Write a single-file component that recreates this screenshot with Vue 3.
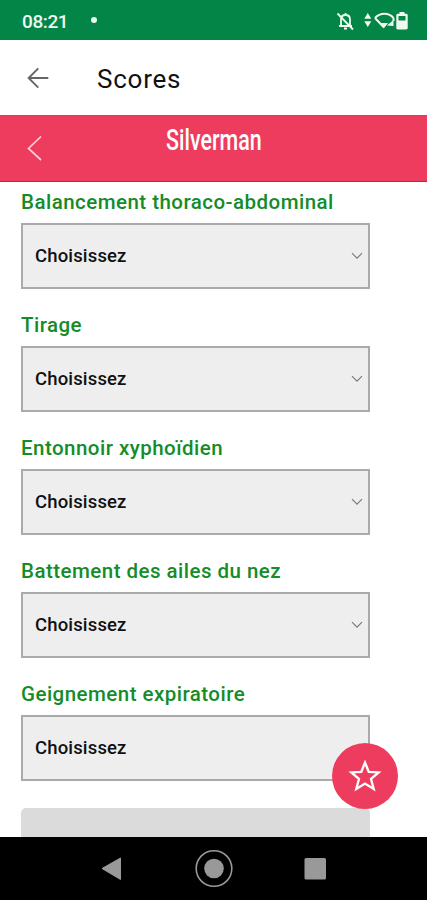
<script setup>
const fields = [
  'Balancement thoraco-abdominal',
  'Tirage',
  'Entonnoir xyphoïdien',
  'Battement des ailes du nez',
  'Geignement expiratoire',
]
</script>

<template>
  <div class="screen">
    <header class="status">
      <span class="time">08:21</span>
      <span class="dot"></span>
      <svg class="status-icons" width="74" height="20" viewBox="0 0 74 20">
        <g fill="none" stroke="#eefaf0" stroke-width="1.8">
          <path d="M4 15h13M6 14.500V8.500C6 5.500 8 4 10.500 4S15 5.500 15 8.500V14.500M10.500 2V4M9 17.500h3" />
          <path d="M2.500 2.500L18 18.500" />
          <path d="M40 7C45 1.400 54 1.400 58.500 7M40 7L48.500 16M58.500 7V10" stroke-width="2" />
        </g>
        <g fill="#eefaf0">
          <path d="M29.300 7.700L32.800 2L36.300 7.700zM29.300 10.300L32.800 16L36.300 10.300z" />
          <path d="M45 12h8L48.800 17.500zM52 14.500L58.500 9v6z" />
          <path fill-rule="evenodd" d="M64.500 1h5v1.800h1.700c.8 0 1.500.6 1.500 1.300v13.200c0 .7-.7 1.200-1.500 1.200h-8.400c-.8 0-1.500-.5-1.500-1.200v-13.200c0-.7.7-1.300 1.500-1.300h1.700zM63.500 5v4.500h7V5z" />
        </g>
      </svg>
    </header>

    <div class="appbar">
      <svg class="back" width="24" height="24" viewBox="0 0 24 24">
        <path d="M22.300 12H2.500M12.300 2.300L2.600 12L12.300 21.700" fill="none" stroke="#666" stroke-width="1.900" />
      </svg>
      <h1>Scores</h1>
    </div>

    <div class="banner">
      <svg class="chevron" width="18" height="28" viewBox="0 0 18 28">
        <path d="M15 2.500L2.500 14.500L15 26" fill="none" stroke="#ffd0d8" stroke-width="1.700" />
      </svg>
      <h2><span>Silverman</span></h2>
    </div>

    <main class="content">
      <section v-for="label in fields" :key="label" class="field">
        <label>{{ label }}</label>
        <div class="select">
          <span>Choisissez</span>
          <svg width="12" height="8" viewBox="0 0 12 8">
            <path d="M1 1.200L6 6.200L11 1.200" fill="none" stroke="#777" stroke-width="1.100" />
          </svg>
        </div>
      </section>
      <div class="result"></div>
      <button class="fab" aria-label="Favori">
        <svg width="34" height="34" viewBox="0 0 34 34">
          <path d="M17 3.500L20.700 12.800L30.700 13.400L23 19.900L25.700 30L17 24.600L8.300 30L11 19.900L3.300 13.400L13.300 12.800Z" fill="none" stroke="#fff" stroke-width="2.300" />
        </svg>
      </button>
    </main>

    <nav class="nav">
      <svg width="427" height="63" viewBox="0 0 427 63">
        <path d="M102 31.500L120.500 21V42.500z" fill="#999" stroke="#999" stroke-linejoin="round" />
        <circle cx="214" cy="31.500" r="17.800" fill="none" stroke="#999" stroke-width="1.600" />
        <circle cx="214" cy="31.500" r="9.800" fill="#999" />
        <rect x="304.500" y="21" width="21.500" height="21.500" rx="1.500" fill="#999" />
      </svg>
    </nav>
  </div>
</template>

<style>
body { margin: 0; }
</style>

<style scoped>
.screen {
  width: 427px;
  height: 900px;
  overflow: hidden;
  display: flex;
  flex-direction: column;
  background: #fff;
  font-family: Roboto, "Liberation Sans", sans-serif;
}
.status {
  box-sizing: border-box;
  height: 40px;
  flex: none;
  display: flex;
  align-items: center;
  padding: 2px 18px 0 22px;
  background: #048548;
  color: #eefaf0;
}
.time { font-size: 19px; font-weight: 500; line-height: 22px; width: 69px; letter-spacing: -0.4px; padding-top: 1px; }
.dot { width: 6px; height: 6px; border-radius: 50%; background: #eefaf0; margin-top: -2px; }
.status-icons { margin-left: auto; }
.appbar {
  height: 75px;
  flex: none;
  display: flex;
  align-items: center;
  padding-left: 26px;
}
.back { margin-right: 47px; }
h1 { margin: 2px 0 0; font-size: 26px; line-height: 32px; font-weight: 400; color: #111; letter-spacing: 0.75px; }
.banner {
  box-sizing: border-box;
  height: 67px;
  flex: none;
  display: grid;
  grid-template-columns: 26px 1fr 26px;
  align-items: start;
  background: #ee3c5e;
  border-top: 1px solid #dc3a56;
  border-bottom: 1px solid #dc1743;
}
.chevron { margin: 18px 0 0 26px; }
h2 { margin: 7px 0 0; text-align: center; line-height: 34px; font-size: 30px; font-weight: 500; color: #fff; }
h2 span { display: inline-block; transform: scaleX(0.715); }
.content { flex: 1; min-height: 0; position: relative; overflow: hidden; padding: 6px 57px 0 21px; }
.field { height: 123px; }
label { display: block; height: 35px; line-height: 28px; font-size: 20.5px; font-weight: 500; color: #148c27; letter-spacing: 0.47px; white-space: nowrap; }
.select {
  box-sizing: border-box;
  height: 66px;
  width: 349px;
  border: 2px solid #aaa;
  background: #eee;
  display: flex;
  align-items: center;
  justify-content: space-between;
  padding: 0 5px 0 12px;
  font-size: 18.5px;
  font-weight: 500;
  color: #111;
  letter-spacing: 0.15px;
}
.select span { padding-bottom: 1px; }
.field:nth-of-type(5) .select svg { visibility: hidden; }
.result { height: 50px; width: 349px; margin-top: 5px; border-radius: 5px; background: #dbdbdb; }
.fab {
  position: absolute;
  left: 332px;
  bottom: 28px;
  width: 66px;
  height: 66px;
  border: 0;
  padding: 0;
  border-radius: 50%;
  background: #ee3c5e;
  display: grid;
  place-items: center;
}
.nav { height: 63px; flex: none; background: #000; }
.nav svg { display: block; }
</style>
